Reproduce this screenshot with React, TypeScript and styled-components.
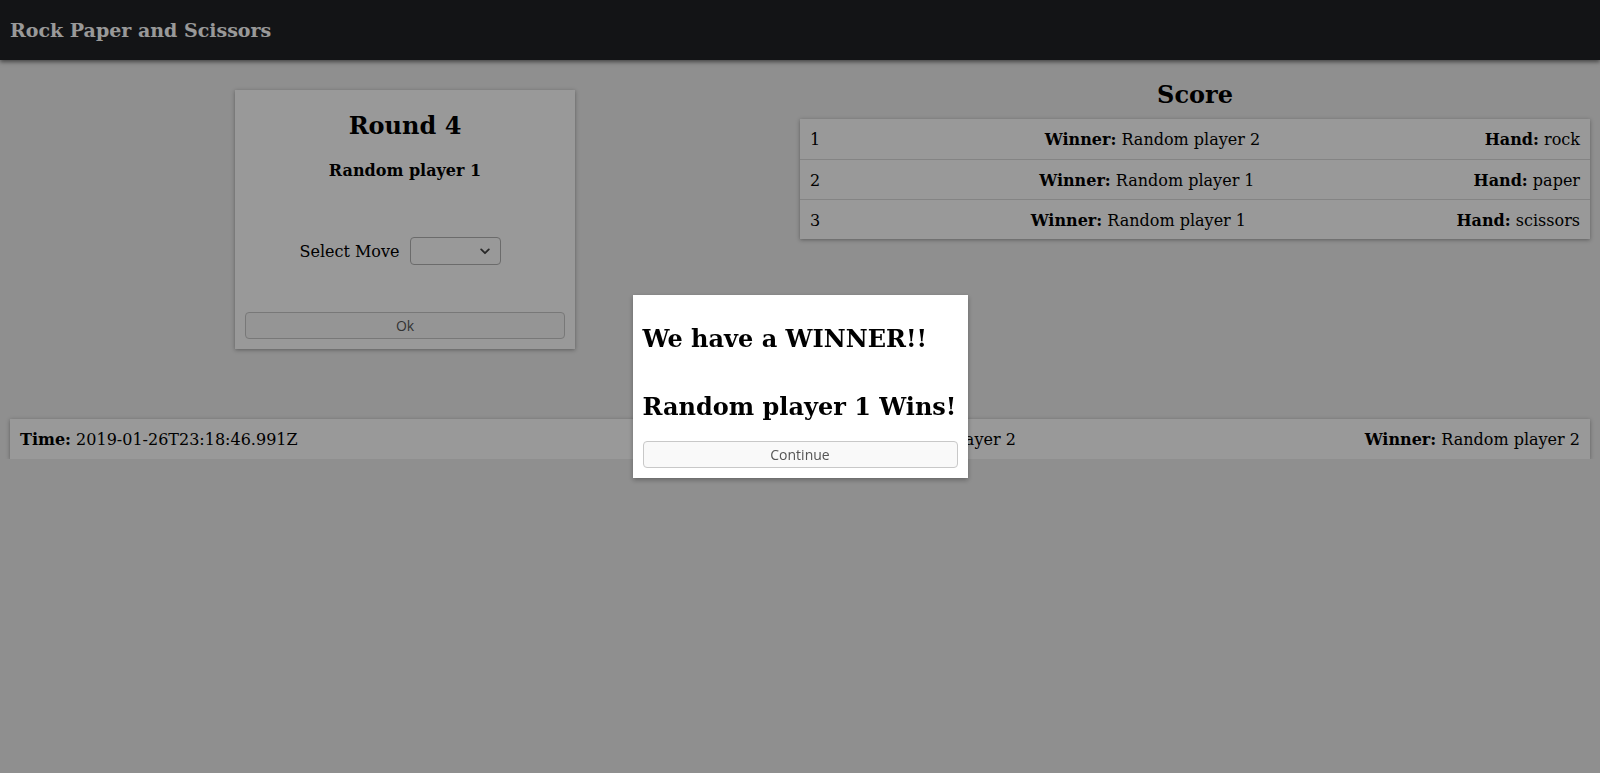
import React from "react";
import styled, { createGlobalStyle } from "styled-components";

const GlobalStyle = createGlobalStyle`
  html, body {
    margin: 0;
    padding: 0;
    background: #eeeeee;
    font-family: "DejaVu Serif", serif;
    font-size: 16px;
    color: #000;
  }
  * { box-sizing: border-box; }
`;

const Header = styled.header`
  height: 60px;
  background: #202226;
  display: flex;
  align-items: center;
  padding-left: 10px;
  box-shadow: 0 2px 4px rgba(0, 0, 0, 0.5);
  position: relative;
`;

const Brand = styled.h1`
  margin: 0;
  font-size: 19px;
  font-weight: bold;
  color: #ffffff;
`;

const Main = styled.main`
  padding: 0 10px;
`;

const TopSection = styled.div`
  display: grid;
  grid-template-columns: 1fr 1fr;
  align-items: start;
`;

const LeftColumn = styled.div`
  display: flex;
  justify-content: center;
  padding-top: 30px;
`;

const RoundCard = styled.div`
  width: 340px;
  background: #ffffff;
  padding: 0 10px 10px;
  box-shadow: 0 1px 4px rgba(0, 0, 0, 0.35);
  text-align: center;
  display: flex;
  flex-direction: column;
`;

const RoundTitle = styled.h2`
  margin: 22px 0 0;
  font-size: 24px;
  line-height: 28px;
`;

const PlayerName = styled.h4`
  margin: 21px 0 0;
  font-size: 16px;
  line-height: 19px;
`;

const MoveRow = styled.div`
  margin-top: 57px;
  display: flex;
  justify-content: center;
  align-items: center;
  gap: 10px;
  padding-right: 10px;
  height: 28px;
`;

const MoveLabel = styled.label`
  font-size: 16px;
`;

const SelectWrap = styled.div`
  position: relative;
  width: 91px;
  height: 28px;
`;

const MoveSelect = styled.select`
  appearance: none;
  -webkit-appearance: none;
  width: 100%;
  height: 100%;
  border: 1px solid #b3b3b3;
  border-radius: 4px;
  background: #ffffff;
  font-family: "Open Sans", sans-serif;
  font-size: 13.33px;
  padding: 0 24px 0 6px;
`;

const Chevron = styled.svg`
  position: absolute;
  right: 11px;
  top: 11px;
  width: 10px;
  height: 7px;
  pointer-events: none;
`;

const ActionButton = styled.button<{ $top: number }>`
  margin-top: ${(p) => p.$top}px;
  width: 100%;
  height: 27px;
  background: #f9f9f9;
  border: 1px solid #c8c8c8;
  border-radius: 4px;
  color: #555555;
  font-family: "Open Sans", sans-serif;
  font-size: 14px;
  padding: 0;
  cursor: pointer;
`;

const RightColumn = styled.div`
  padding-top: 21px;
  display: flex;
  flex-direction: column;
`;

const ScoreTitle = styled.h2`
  margin: 0 0 10px;
  font-size: 24px;
  line-height: 28px;
  text-align: center;
`;

const Panel = styled.div<{ $top?: number }>`
  background: #ffffff;
  box-shadow: 0 1px 4px rgba(0, 0, 0, 0.35);
  margin-top: ${(p) => p.$top ?? 0}px;
`;

const Row = styled.div`
  height: 40px;
  padding: 1px 10px 0;
  display: flex;
  justify-content: space-between;
  align-items: center;
  white-space: nowrap;
  & + & {
    border-top: 1px solid #dddddd;
  }
`;

const Field = styled.span``;

const Key = styled.b`
  font-weight: bold;
`;

const Overlay = styled.div`
  position: fixed;
  inset: 0;
  background: rgba(0, 0, 0, 0.4);
  display: flex;
  align-items: center;
  justify-content: center;
`;

const Modal = styled.div`
  width: 335px;
  background: #ffffff;
  padding: 10px;
  display: flex;
  flex-direction: column;
  box-shadow: 0 2px 5px rgba(0, 0, 0, 0.3);
`;

const ModalTitle = styled.h2`
  margin: 20px 0;
  font-size: 24px;
  line-height: 28px;
  white-space: nowrap;
`;

const scores = [
  { n: 1, winner: "Random player 2", hand: "rock" },
  { n: 2, winner: "Random player 1", hand: "paper" },
  { n: 3, winner: "Random player 1", hand: "scissors" },
];

export default function App() {
  return (
    <>
      <GlobalStyle />
      <Header>
        <Brand>Rock Paper and Scissors</Brand>
      </Header>
      <Main>
        <TopSection>
          <LeftColumn>
            <RoundCard>
              <RoundTitle>Round 4</RoundTitle>
              <PlayerName>Random player 1</PlayerName>
              <MoveRow>
                <MoveLabel>Select Move</MoveLabel>
                <SelectWrap>
                  <MoveSelect defaultValue="">
                    <option value=""></option>
                    <option value="rock">rock</option>
                    <option value="paper">paper</option>
                    <option value="scissors">scissors</option>
                  </MoveSelect>
                  <Chevron viewBox="0 0 10 7">
                    <path
                      d="M1.2 1.4 L5 5.2 L8.8 1.4"
                      fill="none"
                      stroke="#444"
                      strokeWidth="1.8"
                      strokeLinecap="round"
                      strokeLinejoin="round"
                    />
                  </Chevron>
                </SelectWrap>
              </MoveRow>
              <ActionButton $top={47}>Ok</ActionButton>
            </RoundCard>
          </LeftColumn>
          <RightColumn>
            <ScoreTitle>Score</ScoreTitle>
            <Panel>
              {scores.map((s) => (
                <Row key={s.n}>
                  <Field>{s.n}</Field>
                  <Field>
                    <Key>Winner:</Key> {s.winner}
                  </Field>
                  <Field>
                    <Key>Hand:</Key> {s.hand}
                  </Field>
                </Row>
              ))}
            </Panel>
          </RightColumn>
        </TopSection>
        <Panel $top={70}>
          <Row>
            <Field>
              <Key>Time:</Key> 2019-01-26T23:18:46.991Z
            </Field>
            <Field>
              <Key>Players:</Key> Random player 1 - Random player 2
            </Field>
            <Field>
              <Key>Winner:</Key> Random player 2
            </Field>
          </Row>
        </Panel>
      </Main>
      <Overlay>
        <Modal>
          <ModalTitle>We have a WINNER!!</ModalTitle>
          <ModalTitle>Random player 1 Wins!</ModalTitle>
          <ActionButton $top={0}>Continue</ActionButton>
        </Modal>
      </Overlay>
    </>
  );
}
